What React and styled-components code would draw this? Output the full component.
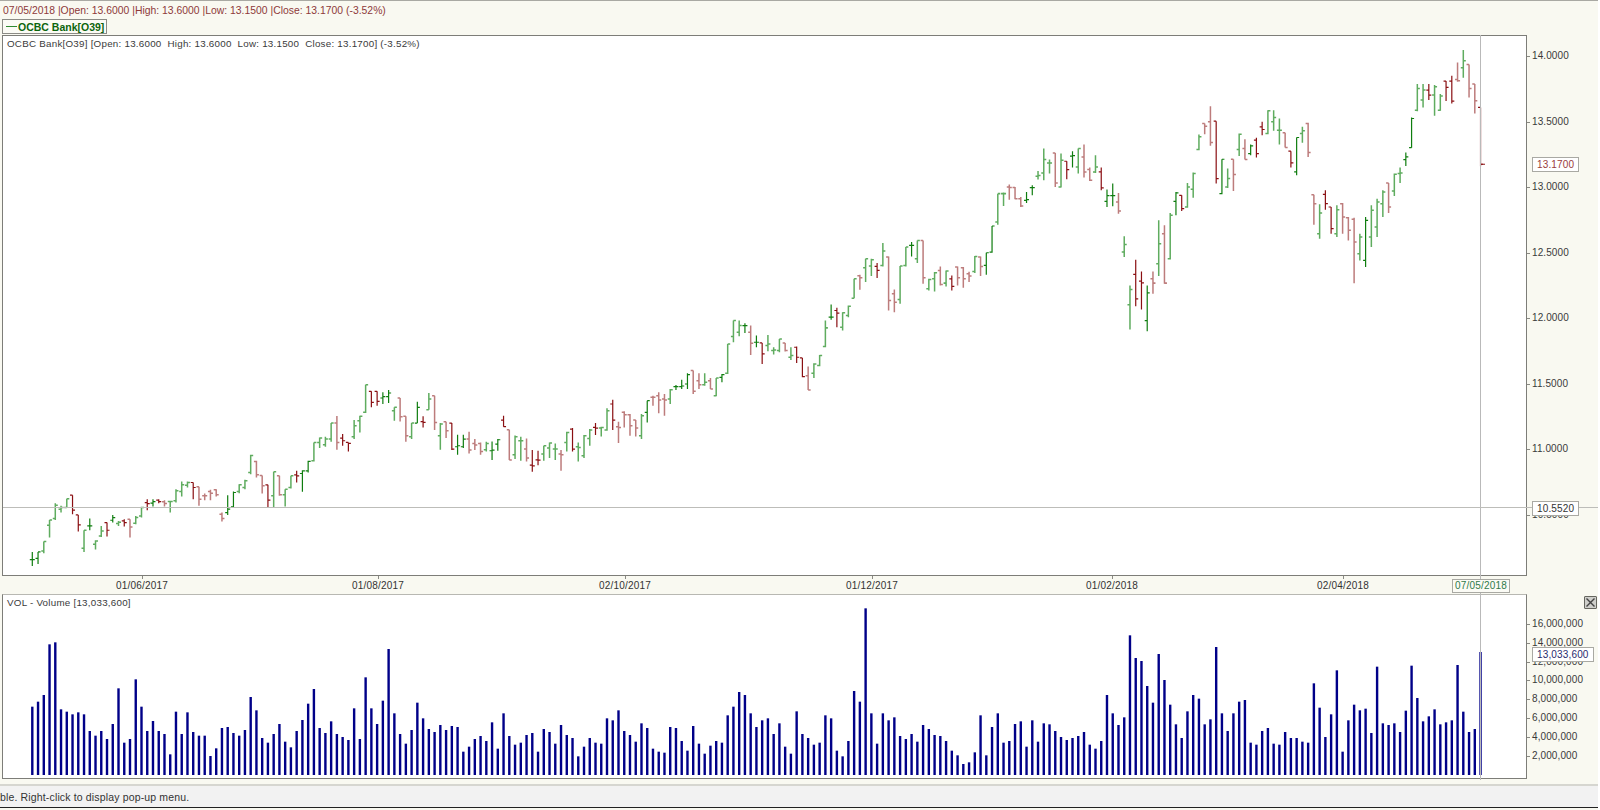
import React from "react";
import styled, { createGlobalStyle } from "styled-components";

const GlobalStyle = createGlobalStyle`
  html, body {
    margin: 0;
    padding: 0;
    background: #fff;
  }
`;

const BAR_START = 32.3;
const BAR_STEP = 5.747;
const barX = (i) => BAR_START + BAR_STEP * i;

// rows measured off the chart: shade, high, low, open, close (y offset x3)
const PRICE_ROWS = [
  [470, `G 243 285 266 266,G 243 279 262 243,g 212 247 240 212,g 147 200 163 147,g 97 147 143 103,
    g 105 125 115 110,g 84 110 110 84,R 73 130 73 118,R 132 182 132 162,g 178 243 232 178,
    G 143 178 165 165,g 208 236 220 210,g 165 198 195 180,R 155 197 155 178,G 132 155 148 140,
    g 150 165 158 154,R 145 167 150 155,r 145 200 145 168,g 135 160 157 140,g 108 140 135 110,
    R 85 118 95 98,G 85 107 97 92,R 85 97 88 92,r 88 107 93 98,g 92 125 92 92,
    g 55 95 90 60,g 32 77 62 42,g 32 50 43 35,R 35 85 35 50,r 48 105 48 85,
    r 68 88 75 75,r 57 88 62 67,r 55 77 57 72,r 125 152 130 143,G 73 132 125 115,
    G 62 110 108 65,g 40 67 62 42,g 27 55 50 30,g -48 10 5 -46,r -30 20 -28 12,
    r 14 68 14 45,R 42 110 42 88,g 3 110 75 3,r 15 75 15 72,g 55 107 72 55,
    g 15 53 50 15,R 0 35 12 15`],
  [360, `G 328 393 338 330,G 300 335 330 302,g 245 302 300 245,g 230 262 245 232,g 228 258 252 235,
    g 187 243 235 187,r 166 267 187 245,R 220 255 232 240,R 245 272 245 248,g 178 235 228 195,
    g 165 215 180 167,g 72 157 155 72,R 92 140 92 125,R 92 135 92 122,G 95 130 112 108,
    G 88 127 108 97,g 140 180 150 140,r 112 182 112 168,r 167 243 167 225,g 187 235 228 187,
    G 123 187 187 140,R 167 200 183 185,g 97 147 147 115,r 105 208 105 185,g 187 267 225 190,
    r 183 232 183 210,R 187 268 187 265,G 222 282 258 255,G 222 262 258 235,r 213 278 235 268,
    r 235 268 248 253,r 245 282 248 272,g 243 272 267 248,G 242 298 270 268,G 235 270 250 237,
    R 165 198 178 198,r 207 298 207 298,g 224 295 282 228,g 228 300 240 240,r 233 302 265 292,
    R 268 333 313 315,R 270 313 297 298,g 255 300 280 255,g 245 292 262 247`],
  [300, `g 428 478 445 445,r 448 510 460 462,g 393 452 425 395,R 382 452 385 445,g 425 482 438 440,
    g 403 472 465 405,g 385 435 413 388,R 367 403 380 382,g 378 407 382 380,g 323 390 388 330,
    R 297 388 310 358,r 363 427 378 380,r 332 380 335 342,r 340 405 342 375,r 358 407 358 382,
    g 340 415 405 345,G 300 365 335 300,r 285 315 290 290,r 275 338 285 298,r 280 345 295 298,
    g 265 310 295 267,G 253 268 258 258,G 237 265 258 256,G 218 265 250 222,r 210 280 210 272,
    r 218 265 240 252,g 218 255 252 245,r 232 265 240 265,g 232 287 285 232,G 220 245 230 222,
    g 130 220 218 130,g 60 125 108 60,g 60 107 95 75,G 68 97 75 75,r 75 163 95 128,
    G 105 140 125 125,R 127 190 127 160,g 103 152 135 130,g 140 162 150 148,g 115 155 150 115,
    r 127 153 127 150,g 140 178 170 165,R 138 187 140 170,R 172 230 172 228,r 198 268 225 268,
    g 188 232 218 190,g 163 197 195 165,g 60 140 138 82`],
  [130, `G 522 568 560 560,R 532 590 540 548,g 545 600 590 547,g 525 560 555 527,g 445 503 503 445,
    r 433 478 436 442,g 385 455 412 385,g 385 437 407 388,R 398 443 408 420,g 338 408 405 362,
    r 378 540 380 510,r 477 545 490 515,g 407 520 507 407,g 350 408 405 350,G 335 378 345 345,
    g 330 398 385 330,r 330 460 330 442,g 445 480 475 447,g 425 483 445 427,r 408 465 420 462,
    g 420 468 458 422,R 435 480 445 468,r 408 465 410 442,r 410 472 412 445,r 424 455 430 437,
    g 377 428 423 378,r 378 437 380 408,G 367 433 405 367,G 287 367 365 287,g 190 283 275 190,
    g 187 227 190 190,r 163 208 170 172,r 170 207 172 205,r 200 230 205 227,G 185 218 210 208,
    G 165 195 172 172,g 122 148 138 136,g 55 150 128 88,g 88 130 98 98,r 68 170 68 158,
    g 70 172 170 90,R 93 147 93 118,G 63 112 78 76,g 55 130 110 55`],
  [90, `r 163 262 200 245,r 232 272 238 270,g 195 248 245 230,R 232 300 245 293,G 298 350 333 316,
    G 280 348 316 316,r 308 370 335 362,g 438 500 485 462,g 585 717 643 597,R 508 647 552 625,
    R 543 657 572 577,G 585 722 690 607,r 543 610 565 578,g 390 557 520 460,r 405 580 430 578,
    g 368 507 505 375,G 305 375 333 308,R 315 362 315 355,g 278 352 350 290,g 247 322 297 250,
    g 133 180 178 140,r 100 132 100 108,r 48 167 95 157,R 93 280 93 265,G 207 312 310 207,
    g 235 293 290 265,r 207 302 207 253,g 130 197 178 132,r 147 208 175 208,G 163 195 190 167,
    R 143 202 150 190,R 95 135 110 118,g 60 132 130 62,g 60 122 95 82,g 85 163 120 120,
    r 128 172 128 172,R 183 232 183 218,G 142 255 245 142,g 110 158 130 122,r 98 200 100 187,
    r 313 403 313 340`],
  [20, `g 552 655 640 578,R 510 568 522 550,R 560 640 560 625,g 555 650 640 568,r 548 640 550 590,
    r 590 660 592 630,r 592 788 597 665,g 640 720 700 650,G 590 740 720 600,g 555 680 650 570,
    g 535 650 620 545,g 510 590 550 515,r 488 578 488 560,g 460 527 512 462,g 442 488 460 458,
    G 397 437 418 410,G 292 383 382 295,g 192 273 270 205,g 192 262 240 210,R 192 240 210 225,
    g 195 287 225 200,g 222 272 270 228,R 183 243 183 202,R 167 250 183 243,r 127 185 178 182,
    g 90 173 143 122,r 133 232 133 205,r 192 280 192 242,R 262 438 262 432`],
];

const BAR_SHADES = {
  g: { color: "#5fac5f", width: 1.5 },
  G: { color: "#0f7d0f", width: 1.2 },
  r: { color: "#bd7c7c", width: 1.5 },
  R: { color: "#8a0f12", width: 1.2 },
};

const priceBars = PRICE_ROWS.flatMap(([offset, rows]) =>
  rows.split(",").map((row) => {
    const [shade, ...values] = row.trim().split(" ");
    const [high, low, open, close] = values.map((v) => offset + Number(v) / 3);
    return { shade, high, low, open, close };
  })
);

// tops of the volume bars, y offset x3 from 590
const VOLUME_TOPS = [
  350, 335, 315, 163, 157, 358, 365, 373, 367, 373, 423, 437, 423, 447, 402, 295, 458, 447, 268, 350,
  423, 393, 423, 432, 493, 365, 432, 367, 426, 437, 437, 498, 475, 414, 411, 429, 437, 420, 321, 361,
  444, 458, 432, 402, 455, 472, 423,
  390, 341, 297, 414, 429, 394, 432, 441, 450, 355, 447, 262, 355, 402, 332, 177, 370, 432, 461, 420,
  338, 385, 417, 426, 405, 420, 408, 411, 485, 470, 447, 438, 453, 397, 476, 370, 438, 464, 458, 435,
  429, 485, 417, 426, 461, 405, 435, 444, 499, 470, 444, 458, 461, 385, 391, 361, 423, 435, 455, 400,
  414, 476, 485, 488, 411, 414, 453, 482, 408, 461, 491, 467, 453, 458, 376, 350, 306, 315, 370, 411,
  391, 385, 432, 400, 470, 491, 364, 432, 444, 464, 458, 376, 385, 482, 499, 453, 303,
  335, 55, 370, 461, 370, 391, 382, 438, 447, 432, 455, 405, 417, 435, 438, 453, 482, 496, 522, 517,
  487, 376, 496, 411, 370, 458, 453, 402, 394, 470, 391, 455, 400, 403, 423, 441, 450, 444, 438, 426,
  464, 476, 453, 315, 370, 405, 382, 136, 204, 213, 288, 338, 192, 270, 344, 403, 444, 364, 315, 326,
  403, 388, 171, 370, 423, 370, 335, 330, 458, 464, 423, 414, 461, 464, 426, 444, 444, 455, 458, 280,
  353, 441, 373, 241, 485, 391, 344, 361,
  356, 429, 230, 400, 405, 400, 426, 362, 227, 324, 394, 379, 358, 403, 397, 391, 225, 365, 426, 417, 186,
];

const PRICE_TICKS = ["14.0000", "13.5000", "13.0000", "12.5000", "12.0000", "11.5000", "11.0000", "10.5000"];
const VOLUME_TICKS = ["16,000,000", "14,000,000", "12,000,000", "10,000,000", "8,000,000", "6,000,000", "4,000,000", "2,000,000"];
const DATES = ["01/06/2017", "01/08/2017", "02/10/2017", "01/12/2017", "01/02/2018", "02/04/2018"];

const Page = styled.div`
  position: relative;
  width: 1598px;
  height: 810px;
  overflow: hidden;
  background: #f9f9f1;
  border-top: 1px solid #a9a9a3;
  box-sizing: border-box;
  font-family: "Liberation Sans", Arial, sans-serif;
  font-size: 10px;
  color: #333;
`;

const QuoteBar = styled.div`
  height: 18px;
  padding-left: 3px;
  line-height: 20px;
  color: #8e3a3a;
  font-size: 10.4px;
  white-space: pre;
`;

const Legend = styled.div`
  display: flex;
  align-items: center;
  gap: 1px;
  width: 100px;
  height: 13px;
  margin-left: 2px;
  padding-left: 3px;
  border: 1px solid #8b8b85;
  background: #fbfbf5;
  color: #0d650d;
  font-size: 10.5px;
  font-weight: 700;
  white-space: nowrap;

  &::before {
    content: "";
    flex: none;
    width: 11px;
    height: 1px;
    background: #2f8a2f;
  }
`;

const PaneRow = styled.div`
  display: flex;
  height: ${({ $height }) => $height}px;
`;

const Plot = styled.div`
  position: relative;
  flex: none;
  width: 1525px;
  margin-left: 2px;
  box-sizing: border-box;
  background: #fff;
  border: 1px solid #7d7d78;
  border-top-color: ${({ $soft }) => ($soft ? "#b8b8b2" : "#7d7d78")};
`;

const PlotCaption = styled.div`
  position: absolute;
  top: 2px;
  left: 4px;
  line-height: 12px;
  font-size: 9.8px;
  letter-spacing: 0.24px;
  color: #3a3a3a;
  white-space: pre;
`;

const ChartSvg = styled.svg`
  display: block;
  width: 100%;
  height: 100%;
`;

const Axis = styled.div`
  position: relative;
  flex: 1;
  display: flex;
  flex-direction: column;
  padding-top: ${({ $top }) => $top}px;
`;

const AxisTick = styled.div`
  display: flex;
  align-items: flex-start;
  gap: 2px;
  flex: none;
  height: ${({ $step }) => $step}px;
  line-height: 12px;
  font-size: 10px;
  letter-spacing: 0.1px;
  color: #3a3a3a;
  white-space: nowrap;

  &::before {
    content: "";
    flex: none;
    width: 3px;
    height: 1px;
    margin-top: 6px;
    background: #8a8a84;
  }
`;

const ValueTag = styled.div`
  position: absolute;
  top: ${({ $top }) => $top}px;
  left: 5px;
  height: 13px;
  padding: 0 4px;
  line-height: 13px;
  font-size: 10px;
  letter-spacing: 0.15px;
  background: #fff;
  border: 1px solid #a9a9a3;
  color: ${({ $color }) => $color};
  z-index: 3;
  white-space: nowrap;
`;

const DateStrip = styled.div`
  position: relative;
  display: grid;
  grid-template-columns: 116px 236px 247px 247px 240px 231px;
  height: 18px;
`;

const DateCell = styled.div`
  grid-column: ${({ $col }) => $col};
  position: relative;
  width: 52px;
  padding-top: 4px;
  line-height: 12px;
  text-align: center;
  font-size: 10px;
  letter-spacing: 0.2px;
  color: #333;
  white-space: nowrap;

  &::before {
    content: "";
    position: absolute;
    left: 50%;
    top: 0;
    width: 1px;
    height: 3px;
    background: #8a8a84;
  }
`;

const DateTag = styled.div`
  position: absolute;
  z-index: 3;
  top: 3px;
  left: 1452px;
  width: 56px;
  height: 12px;
  line-height: 12px;
  text-align: center;
  font-size: 10px;
  letter-spacing: 0.2px;
  background: #fbfbf5;
  border: 1px solid #a9a9a3;
  color: #2f7a4a;
`;

const CloseButton = styled.button`
  flex: none;
  display: flex;
  align-items: center;
  justify-content: center;
  width: 13px;
  height: 13px;
  margin: 0 0 9px 57px;
  padding: 0;
  border: 1px solid #66665f;
  border-radius: 1px;
  background: #cfcfcb;
`;

const CrossV = styled.div`
  position: absolute;
  top: 34px;
  left: 1480px;
  width: 1px;
  height: 745px;
  background: #b9b9b9;
  z-index: 2;
`;

const CrossH = styled.div`
  position: absolute;
  top: 506px;
  left: 3px;
  right: 0;
  height: 1px;
  background: #bdbdb9;
  z-index: 2;
`;

const StatusBar = styled.div`
  height: 21px;
  margin-top: 5px;
  border-top: 2px solid #d6d6d0;
  border-bottom: 1px solid #222;
  background: #f2f2f2;
  line-height: 22px;
  font-size: 10.5px;
  letter-spacing: 0.15px;
  color: #333;
  white-space: nowrap;
`;

const PriceChart = () => (
  <ChartSvg viewBox="3 36 1523 538" preserveAspectRatio="none">
    {priceBars.map(({ shade, high, low, open, close }, i) => {
      const x = barX(i);
      const { color, width } = BAR_SHADES[shade];
      return (
        <path
          key={i}
          d={`M${x} ${high}V${low}M${x - 2.5} ${open}H${x}M${x} ${close}H${x + 2.5}`}
          fill="none"
          stroke={color}
          strokeWidth={width}
        />
      );
    })}
    <path d="M1481 164H1485" stroke="#8a0f12" strokeWidth="1" />
  </ChartSvg>
);

const VolumeChart = () => (
  <ChartSvg viewBox="3 595 1523 183" preserveAspectRatio="none">
    {VOLUME_TOPS.map((top, i) => {
      const y = 590 + top / 3;
      return <rect key={i} x={barX(i) - 1.2} y={y} width="2.4" height={775 - y} fill="#000088" />;
    })}
  </ChartSvg>
);

const App = () => (
  <>
    <GlobalStyle />
    <Page>
      <CrossV />
      <CrossH />
      <QuoteBar>07/05/2018 |Open: 13.6000 |High: 13.6000 |Low: 13.1500 |Close: 13.1700 (-3.52%)</QuoteBar>
      <Legend>OCBC Bank[O39]</Legend>
      <PaneRow $height={541} style={{ marginTop: 1 }}>
        <Plot>
          <PlotCaption>OCBC Bank[O39] [Open: 13.6000  High: 13.6000  Low: 13.1500  Close: 13.1700] (-3.52%)</PlotCaption>
          <PriceChart />
        </Plot>
        <Axis $top={15}>
          {PRICE_TICKS.map((label) => (
            <AxisTick key={label} $step={65.5}>{label}</AxisTick>
          ))}
          <ValueTag $color="#9a3b3b" $top={122}>13.1700</ValueTag>
          <ValueTag $color="#333" $top={466}>10.5520</ValueTag>
        </Axis>
      </PaneRow>
      <DateStrip>
        {DATES.map((label, i) => (
          <DateCell key={label} $col={i + 2}>{label}</DateCell>
        ))}
        <DateTag>07/05/2018</DateTag>
      </DateStrip>
      <PaneRow $height={185}>
        <Plot $soft>
          <PlotCaption>VOL - Volume [13,033,600]</PlotCaption>
          <VolumeChart />
        </Plot>
        <Axis $top={2}>
          <CloseButton aria-label="Close panel">
            <svg width="11" height="11" viewBox="0 0 11 11">
              <path d="M1.5 1.5L9.5 9.5M9.5 1.5L1.5 9.5" stroke="#444" strokeWidth="1.4" />
            </svg>
          </CloseButton>
          {VOLUME_TICKS.map((label) => (
            <AxisTick key={label} $step={18.8}>{label}</AxisTick>
          ))}
          <ValueTag $color="#2a2a6e" $top={53}>13,033,600</ValueTag>
        </Axis>
      </PaneRow>
      <StatusBar>ble. Right-click to display pop-up menu.</StatusBar>
    </Page>
  </>
);

export default App;
